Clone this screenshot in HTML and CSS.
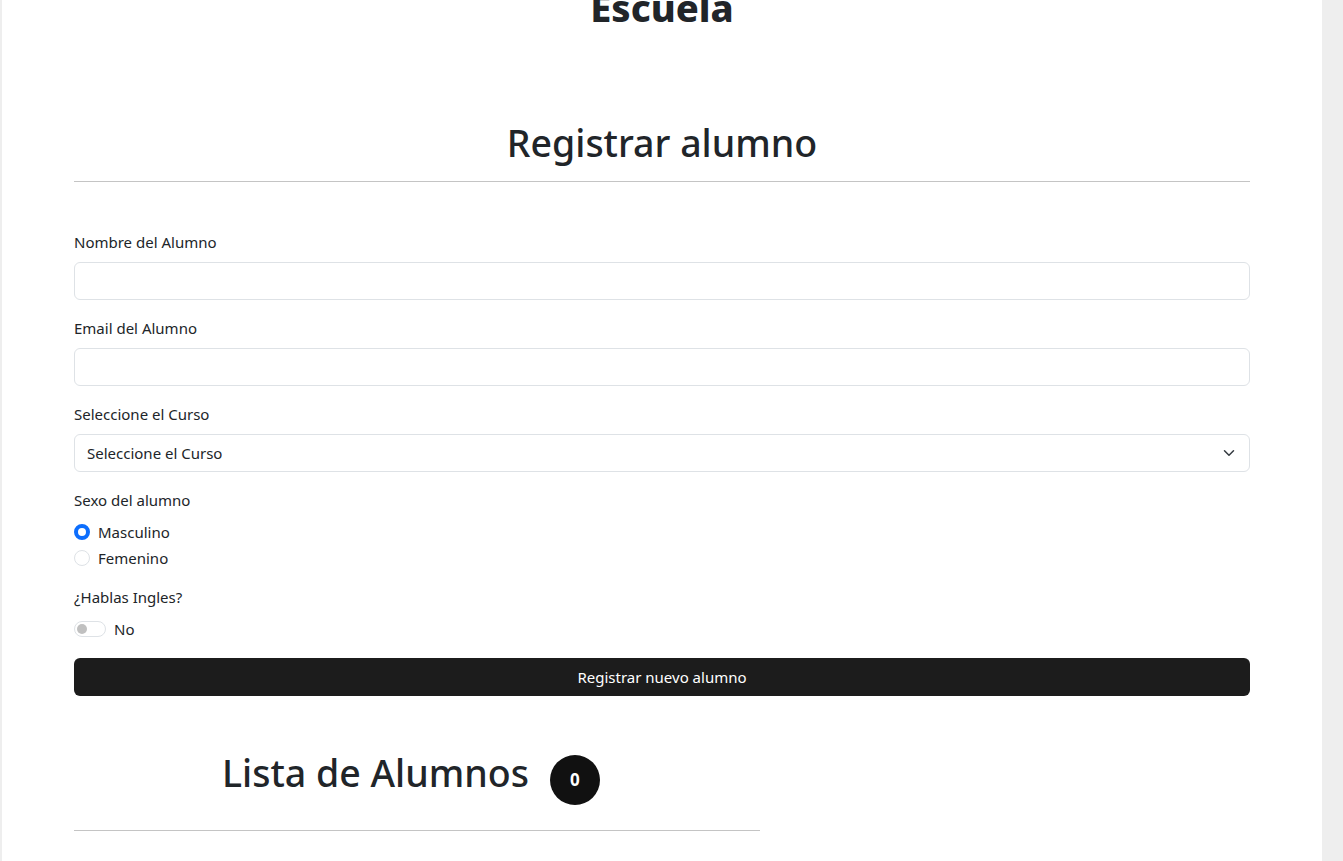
FILE: index.html
```html
<!DOCTYPE html>
<html lang="es">
<head>
<meta charset="utf-8">
<title>Escuela</title>
<link rel="stylesheet" href="styles.css">
</head>
<body>
<div class="page">
  <div class="container">
    <h1 class="brand">Escuela</h1>
    <h2 class="section-title">Registrar alumno</h2>
    <hr class="rule">
    <form class="form">
      <div class="field">
        <label class="label">Nombre del Alumno</label>
        <input class="input" type="text">
      </div>
      <div class="field">
        <label class="label">Email del Alumno</label>
        <input class="input" type="email">
      </div>
      <div class="field">
        <label class="label">Seleccione el Curso</label>
        <div class="select">
          <span>Seleccione el Curso</span>
          <svg class="chev" width="12" height="12" viewBox="0 0 16 16"><path d="M2 5l6 6 6-6" fill="none" stroke="#343a40" stroke-width="2" stroke-linecap="round" stroke-linejoin="round"/></svg>
        </div>
      </div>
      <div class="field radios">
        <label class="label">Sexo del alumno</label>
        <div class="check"><span class="radio checked"></span><span>Masculino</span></div>
        <div class="check"><span class="radio"></span><span>Femenino</span></div>
      </div>
      <div class="field">
        <label class="label">¿Hablas Ingles?</label>
        <div class="check"><span class="switch"><span class="knob"></span></span><span class="switch-text">No</span></div>
      </div>
      <button type="button" class="btn">Registrar nuevo alumno</button>
    </form>
    <div class="list-col">
      <h2 class="list-title">Lista de Alumnos <span class="badge">0</span></h2>
      <hr class="rule list-rule">
    </div>
  </div>
</div>
</body>
</html>
```
FILE: styles.css
```css
html, body {
  margin: 0;
  padding: 0;
  background: #eeeeee;
  overflow: hidden;
}
body {
  font-family: "Noto Sans", "Open Sans", sans-serif;
  color: #212529;
  font-size: 15px;
}
.page {
  display: flow-root;
  margin: 0 21px 0 2px;
  background: #ffffff;
  min-height: 900px;
}
.container {
  padding: 0 72px;
}
.brand {
  margin: -17px 0 0;
  text-align: center;
  font-size: 38px;
  font-weight: 800;
  line-height: 48px;
}
.section-title {
  margin: 88px 0 0;
  text-align: center;
  font-size: 37.5px;
  font-weight: 500;
  line-height: 48px;
}
.rule {
  margin: 14px 0 0;
  border: 0;
  border-top: 1px solid #c4c4c4;
}
.form {
  margin-top: 48px;
  display: flex;
  flex-direction: column;
}
.field {
  display: flex;
  flex-direction: column;
  margin-bottom: 16px;
}
.label {
  line-height: 24px;
  margin-bottom: 8px;
}
.input {
  height: 38px;
  box-sizing: border-box;
  border: 1px solid #dee2e6;
  border-radius: 6px;
  font: inherit;
  padding: 6px 12px;
}
.select {
  height: 38px;
  box-sizing: border-box;
  border: 1px solid #dee2e6;
  border-radius: 6px;
  padding: 0 14px 0 12px;
  display: flex;
  align-items: center;
  justify-content: space-between;
}
.chev {
  width: 12px;
  height: 12px;
}
.check {
  display: flex;
  align-items: center;
  gap: 8px;
  height: 26px;
}
.radios {
  margin-bottom: 14px;
}
.radios .label {
  margin-bottom: 7px;
}
.radio {
  width: 16px;
  height: 16px;
  box-sizing: border-box;
  border: 1px solid #dee2e6;
  border-radius: 50%;
}
.radio.checked {
  border: 4.5px solid #0d6efd;
  background: #fff;
}
.switch {
  width: 32px;
  height: 16px;
  box-sizing: border-box;
  border: 1px solid #dee2e6;
  border-radius: 8px;
  display: flex;
  align-items: center;
  padding-left: 2px;
  margin-top: -2px;
}
.knob {
  width: 10px;
  height: 10px;
  border-radius: 50%;
  background: #c0c0c0;
}
.switch-text {
  margin-top: -2px;
}
.btn {
  height: 38px;
  background: #1c1c1c;
  color: #fff;
  border: 0;
  border-radius: 6px;
  font: inherit;
  margin-top: -1px;
}
.list-col {
  width: 686px;
  margin-top: 45px;
}
.list-title {
  margin: 0;
  padding-right: 12px;
  text-align: center;
  font-size: 37.5px;
  font-weight: 500;
  line-height: 60px;
  display: flex;
  justify-content: center;
  align-items: center;
  gap: 21px;
}
.badge {
  width: 50px;
  height: 50px;
  border-radius: 50%;
  background: #111;
  color: #fff;
  font-size: 17px;
  font-weight: 700;
  display: flex;
  align-items: center;
  justify-content: center;
  margin-top: 14px;
}
.list-rule {
  margin-top: 25px;
}
```
